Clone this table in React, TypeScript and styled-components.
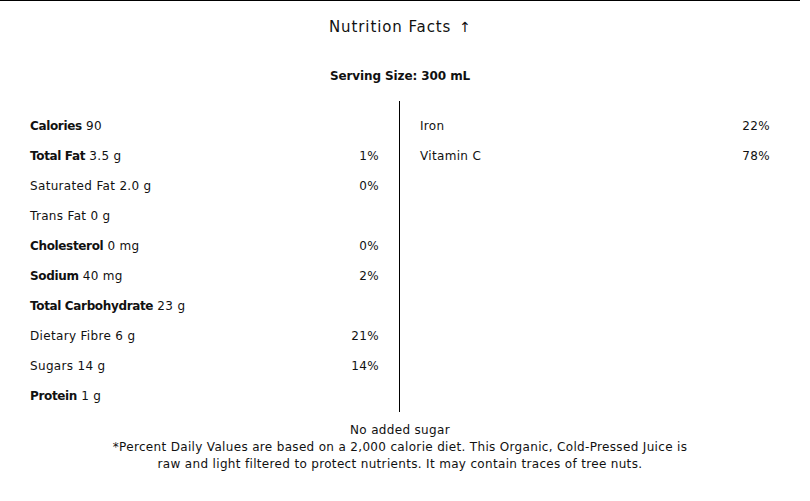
import React from "react";
import styled, { createGlobalStyle } from "styled-components";

const Global = createGlobalStyle`
  html, body { margin: 0; padding: 0; background: #fff; }
  body { font-family: "DejaVu Sans", "Liberation Sans", sans-serif; color: #111; letter-spacing: 0.33px; }
`;

const Panel = styled.section`
  width: 800px;
  border-top: 1px solid #000;
  display: flex;
  flex-direction: column;
  align-items: center;
`;

const Title = styled.h2`
  margin: 16px 0 0;
  font-size: 15px;
  line-height: 20px;
  font-weight: 400;
  letter-spacing: 0.9px;
  display: flex;
  align-items: center;
  gap: 8px;
`;

const Arrow = styled.span`
  font-size: 14px;
  letter-spacing: 0;
`;

const Serving = styled.div`
  margin-top: 29px;
  font-size: 12px;
  line-height: 20px;
  font-weight: 700;
  letter-spacing: -0.1px;
`;

const Columns = styled.div`
  margin-top: 15px;
  width: 100%;
  display: grid;
  grid-template-columns: 1fr 1fr;
`;

const Column = styled.div<{ $side: "left" | "right" }>`
  padding: 10px ${(p) => (p.$side === "left" ? "20px 1px 30px" : "30px 0 20px")};
  border-right: ${(p) => (p.$side === "left" ? "1px solid #000" : "none")};
  display: flex;
  flex-direction: column;
`;

const Row = styled.div`
  height: 30px;
  display: flex;
  align-items: center;
  justify-content: space-between;
  font-size: 12px;
`;

const Label = styled.span``;

const Strong = styled.b`
  font-weight: 700;
  letter-spacing: -0.35px;
`;

const Footer = styled.div`
  margin-top: 10px;
  width: 620px;
  text-align: center;
  font-size: 12px;
  line-height: 17px;
`;

type Item = { name: string; bold?: boolean; amount?: string; pct?: string };

const left: Item[] = [
  { name: "Calories", bold: true, amount: "90" },
  { name: "Total Fat", bold: true, amount: "3.5 g", pct: "1%" },
  { name: "Saturated Fat", amount: "2.0 g", pct: "0%" },
  { name: "Trans Fat", amount: "0 g" },
  { name: "Cholesterol", bold: true, amount: "0 mg", pct: "0%" },
  { name: "Sodium", bold: true, amount: "40 mg", pct: "2%" },
  { name: "Total Carbohydrate", bold: true, amount: "23 g" },
  { name: "Dietary Fibre", amount: "6 g", pct: "21%" },
  { name: "Sugars", amount: "14 g", pct: "14%" },
  { name: "Protein", bold: true, amount: "1 g" },
];

const right: Item[] = [
  { name: "Iron", pct: "22%" },
  { name: "Vitamin C", pct: "78%" },
];

function Line({ item }: { item: Item }) {
  return (
    <Row>
      <Label>
        {item.bold ? <Strong>{item.name}</Strong> : item.name}
        {item.amount ? ` ${item.amount}` : ""}
      </Label>
      {item.pct && <span>{item.pct}</span>}
    </Row>
  );
}

export default function App() {
  return (
    <>
      <Global />
      <Panel>
        <Title>
          Nutrition Facts <Arrow>↑</Arrow>
        </Title>
        <Serving>Serving Size: 300 mL</Serving>
        <Columns>
          <Column $side="left">
            {left.map((it) => (
              <Line key={it.name} item={it} />
            ))}
          </Column>
          <Column $side="right">
            {right.map((it) => (
              <Line key={it.name} item={it} />
            ))}
          </Column>
        </Columns>
        <Footer>
          No added sugar
          <br />
          *Percent Daily Values are based on a 2,000 calorie diet. This Organic, Cold-Pressed Juice is
          <br />
          raw and light filtered to protect nutrients. It may contain traces of tree nuts.
        </Footer>
      </Panel>
    </>
  );
}
